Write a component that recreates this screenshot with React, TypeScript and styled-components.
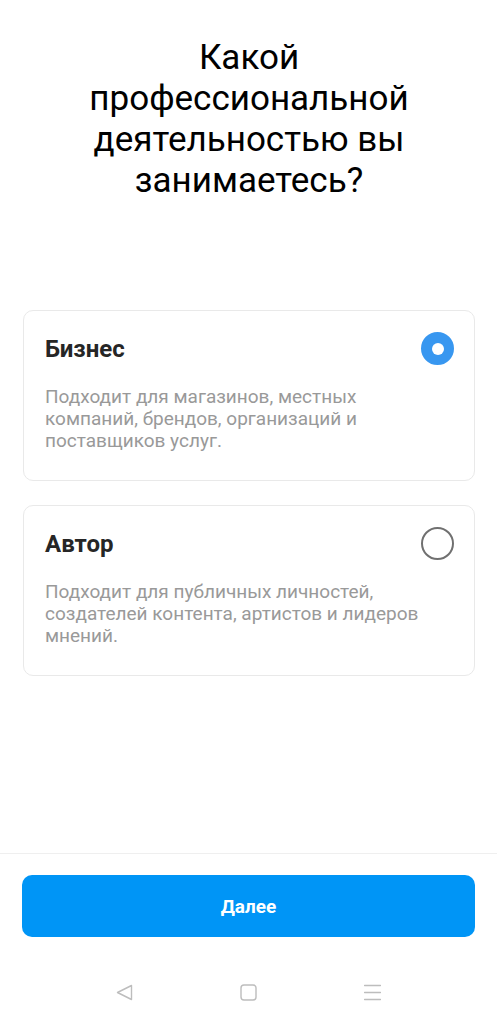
import React, { ReactElement, useState } from "react";
import styled, { createGlobalStyle } from "styled-components";

const GlobalStyle = createGlobalStyle`
  html, body {
    margin: 0;
    padding: 0;
    background: #ffffff;
  }
  body {
    font-family: Roboto, "Liberation Sans", Arial, sans-serif;
    -webkit-font-smoothing: antialiased;
  }
`;

const Page = styled.div`
  display: flex;
  flex-direction: column;
  height: 1024px;
  background: #ffffff;
`;

const Content = styled.div`
  flex: 1;
  display: flex;
  flex-direction: column;
  padding: 37px 22px 0 23px;
`;

const Title = styled.h1`
  margin: 0 0 109px;
  font-size: 35px;
  line-height: 41px;
  font-weight: 400;
  color: #000000;
  text-align: center;
`;

const Options = styled.div`
  display: flex;
  flex-direction: column;
  gap: 24px;
`;

const Card = styled.div`
  border: 1px solid #e9e9e9;
  border-radius: 10px;
  padding: 21px 20px 28px 21px;
  cursor: pointer;
`;

const CardHeader = styled.div`
  display: flex;
  align-items: center;
  justify-content: space-between;
  height: 33px;
`;

const CardTitle = styled.div`
  font-size: 24px;
  line-height: 28px;
  font-weight: 700;
  color: #262626;
`;

const Radio = styled.div<{ $checked: boolean }>`
  box-sizing: border-box;
  width: 33px;
  height: 33px;
  border-radius: 50%;
  background: ${p => (p.$checked ? "#3897f0" : "#ffffff")};
  border: ${p => (p.$checked ? "10.5px solid #3897f0" : "2.5px solid #707070")};
  display: flex;
  align-items: center;
  justify-content: center;

  &::after {
    content: "";
    display: ${p => (p.$checked ? "block" : "none")};
    width: 12px;
    height: 12px;
    border-radius: 50%;
    background: #ffffff;
  }
`;

const Description = styled.p`
  margin: 21px 0 0;
  max-width: 392px;
  font-size: 19px;
  line-height: 22px;
  color: #999999;
`;

const Footer = styled.div`
  border-top: 1px solid #efefef;
  padding: 21px 22px 0;
`;

const NextButton = styled.button`
  display: block;
  width: 100%;
  height: 62px;
  border: none;
  border-radius: 10px;
  background: #0095f6;
  color: #ffffff;
  font-family: inherit;
  font-size: 19px;
  font-weight: 700;
  cursor: pointer;
`;

const NavBar = styled.div`
  display: flex;
  align-items: center;
  justify-content: center;
  gap: 107px;
  height: 64px;
  margin-top: 23px;
`;

const NavIcon = styled.svg`
  width: 17px;
  height: 17px;
  stroke: #bdbdbd;
  fill: none;
  stroke-width: 1.4;
  stroke-linejoin: round;
  stroke-linecap: round;
`;

const options = [
  {
    id: "business",
    title: "Бизнес",
    text: "Подходит для магазинов, местных компаний, брендов, организаций и поставщиков услуг.",
  },
  {
    id: "creator",
    title: "Автор",
    text: "Подходит для публичных личностей, создателей контента, артистов и лидеров мнений.",
  },
];

export default function App(): ReactElement {
  const [selected, setSelected] = useState<string>("business");

  return (
    <Page>
      <GlobalStyle />
      <Content>
        <Title>
          Какой
          <br />
          профессиональной
          <br />
          деятельностью вы
          <br />
          занимаетесь?
        </Title>
        <Options>
          {options.map(option => (
            <Card key={option.id} onClick={() => setSelected(option.id)}>
              <CardHeader>
                <CardTitle>{option.title}</CardTitle>
                <Radio $checked={selected === option.id} />
              </CardHeader>
              <Description>{option.text}</Description>
            </Card>
          ))}
        </Options>
      </Content>
      <Footer>
        <NextButton>Далее</NextButton>
        <NavBar>
          <NavIcon viewBox="0 0 17 17">
            <path d="M15.5 1.5 L1.5 8.5 L15.5 15.5 Z" />
          </NavIcon>
          <NavIcon viewBox="0 0 17 17">
            <rect x="1" y="1" width="15" height="15" rx="3" />
          </NavIcon>
          <NavIcon viewBox="0 0 17 17">
            <path d="M0.5 1.5 H16.5 M0.5 8.5 H16.5 M0.5 15.5 H16.5" />
          </NavIcon>
        </NavBar>
      </Footer>
    </Page>
  );
}
